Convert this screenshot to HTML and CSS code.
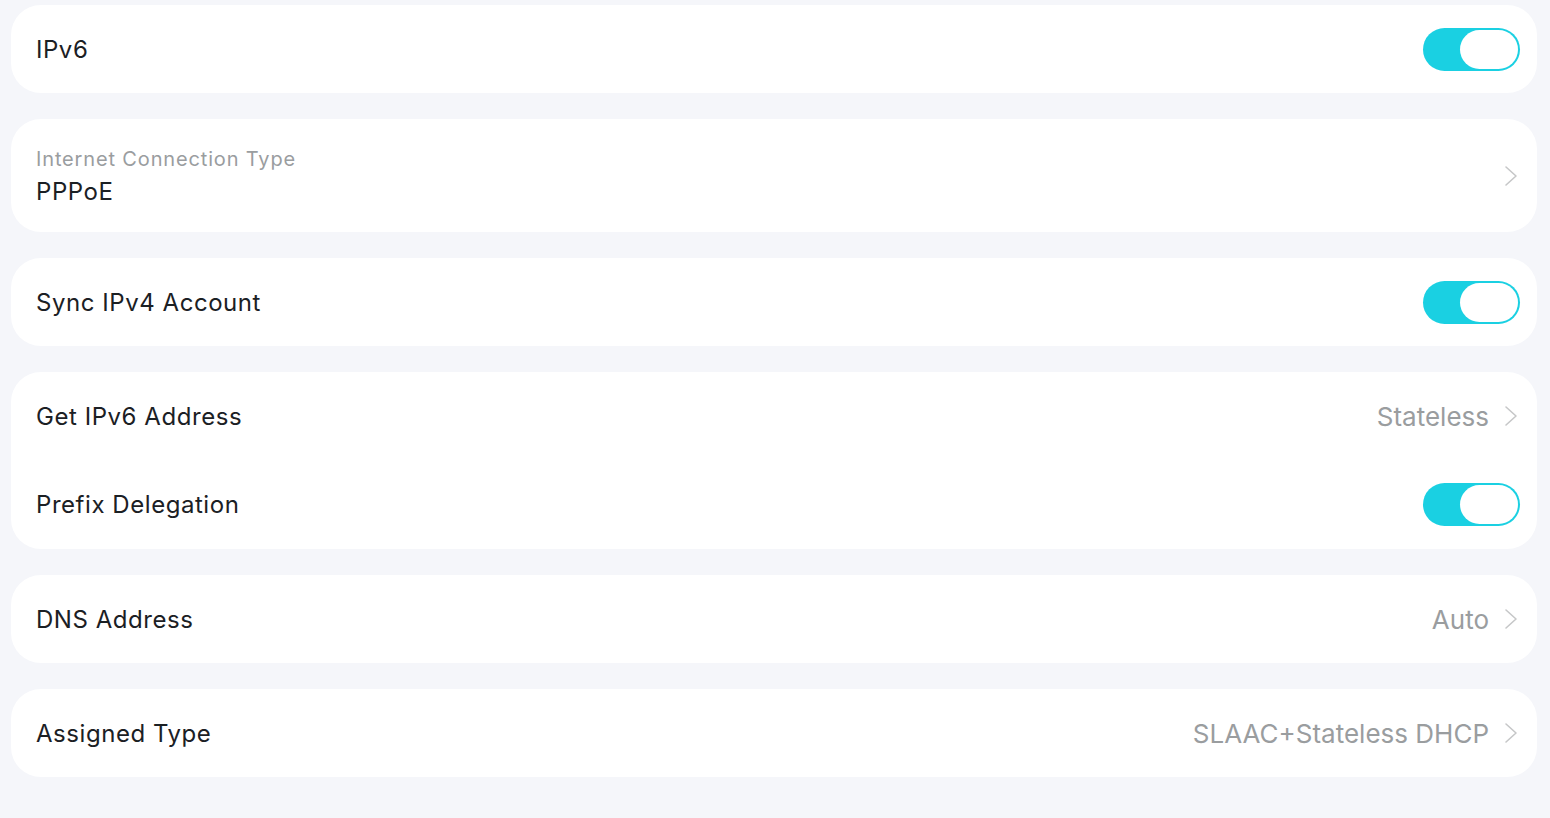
FILE: index.html
```html
<!DOCTYPE html>
<html lang="en">
<head>
  <meta charset="UTF-8" />
  <title>IPv6 Settings</title>
  <meta name="viewport" content="width=device-width, initial-scale=1.0"/>
  <link rel="stylesheet" href="styles.css">
</head>
<body>
  <div class="settings">
    <div class="card">
      <div class="row">
        <span class="title">IPv6</span>
        <span class="toggle on"><span class="knob"></span></span>
      </div>
    </div>

    <div class="card">
      <div class="row row-tall">
        <div class="stack">
          <span class="label">Internet Connection Type</span>
          <span class="title">PPPoE</span>
        </div>
        <svg class="chevron" viewBox="0 0 14 22"><path d="M2 2 L12 11 L2 20" /></svg>
      </div>
    </div>

    <div class="card">
      <div class="row">
        <span class="title">Sync IPv4 Account</span>
        <span class="toggle on"><span class="knob"></span></span>
      </div>
    </div>

    <div class="card">
      <div class="row">
        <span class="title">Get IPv6 Address</span>
        <span class="value">Stateless
          <svg class="chevron" viewBox="0 0 14 22"><path d="M2 2 L12 11 L2 20" /></svg>
        </span>
      </div>
      <div class="row">
        <span class="title">Prefix Delegation</span>
        <span class="toggle on"><span class="knob"></span></span>
      </div>
    </div>

    <div class="card">
      <div class="row">
        <span class="title">DNS Address</span>
        <span class="value">Auto
          <svg class="chevron" viewBox="0 0 14 22"><path d="M2 2 L12 11 L2 20" /></svg>
        </span>
      </div>
    </div>

    <div class="card">
      <div class="row">
        <span class="title">Assigned Type</span>
        <span class="value">SLAAC+Stateless DHCP
          <svg class="chevron" viewBox="0 0 14 22"><path d="M2 2 L12 11 L2 20" /></svg>
        </span>
      </div>
    </div>
  </div>
</body>
</html>
```

FILE: styles.css
```css
:root {
  --bg: #f5f6fa;
  --card: #ffffff;
  --text: #1b2024;
  --muted: #9a9d9f;
  --chevron: #c6c7c8;
  --cyan: #1ad0e2;
}
body {
  font-family: Inter, 'Noto Sans', sans-serif;
  background-color: var(--bg);
  color: var(--text);
  margin: 0;
  padding: 5px 13px 40px 11px;
}
.settings {
  display: flex;
  flex-direction: column;
  gap: 26px;
}
.card {
  background-color: var(--card);
  border-radius: 30px;
}
.row {
  display: flex;
  align-items: center;
  justify-content: space-between;
  height: 88px;
  padding: 0 17px 0 25px;
}
.card .row + .row {
  height: 89px;
}
.row-tall {
  height: 113px;
}
.stack {
  display: flex;
  flex-direction: column;
  gap: 6px;
  padding-top: 2px;
}
.title {
  font-size: 24px;
  letter-spacing: 0.55px;
}
.label {
  font-size: 20px;
  letter-spacing: 0.85px;
  color: var(--muted);
}
.value {
  display: flex;
  align-items: center;
  gap: 15px;
  font-size: 26px;
  color: var(--muted);
}
.chevron {
  width: 14px;
  height: 22px;
  margin-right: 2px;
}
.chevron path {
  fill: none;
  stroke: var(--chevron);
  stroke-width: 1.6;
  stroke-linecap: round;
  stroke-linejoin: round;
}
.toggle {
  width: 97px;
  height: 43px;
  border-radius: 22px;
  background-color: #d0d3d6;
  display: flex;
  align-items: center;
  padding: 2px;
  box-sizing: border-box;
}
.toggle.on {
  background-color: var(--cyan);
  justify-content: flex-end;
}
.knob {
  width: 58px;
  height: 39px;
  border-radius: 20px;
  background-color: #fff;
}
```
